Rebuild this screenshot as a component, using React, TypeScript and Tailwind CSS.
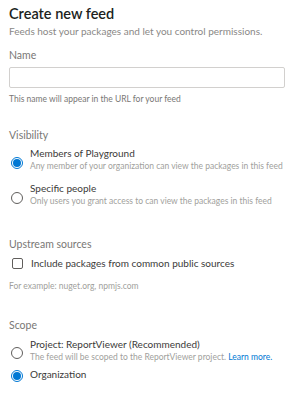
import React, { useState } from 'react';

const font = { fontFamily: 'Lato, "Open Sans", sans-serif' };

const Radio: React.FC<{ checked: boolean; className?: string }> = ({ checked, className = '' }) => (
  <span
    className={`w-[12px] h-[12px] rounded-full flex-shrink-0 flex items-center justify-center border ${
      checked ? 'border-[#0078d4]' : 'border-[#605e5c]'
    } ${className}`}
  >
    {checked && <span className="w-[8px] h-[8px] rounded-full bg-[#0078d4]" />}
  </span>
);

const App: React.FC = () => {
  const [visibility, setVisibility] = useState('members');
  const [scope, setScope] = useState('org');
  const [upstream, setUpstream] = useState(false);

  return (
    <div className="w-[297px] h-[400px] bg-white px-[9px] pt-[4px] text-[#323130] whitespace-nowrap" style={font}>
      {/* Header */}
      <h1 className="text-[14.5px] leading-[20px] font-semibold text-[#201f1e]">Create new feed</h1>
      <p className="text-[10px] leading-[14px] text-[#8a8886]">
        Feeds host your packages and let you control permissions.
      </p>

      {/* Name */}
      <div className="mt-[10px] text-[10.5px] leading-[14px] text-[#797775]">Name</div>
      <input
        type="text"
        className="mt-[5px] block w-[276px] h-[21px] border border-[#d2d0ce] rounded-[2px] outline-none px-2 text-[11px]"
      />
      <p className="mt-[5px] text-[8.5px] leading-[12px] text-[#797775]">
        This name will appear in the URL for your feed
      </p>

      {/* Visibility */}
      <div className="mt-[23px] text-[10.5px] leading-[14px] text-[#797775]">Visibility</div>
      <div className="mt-[5px] flex flex-col gap-[10px]">
        {[
          { id: 'members', title: 'Members of Playground', desc: 'Any member of your organization can view the packages in this feed' },
          { id: 'specific', title: 'Specific people', desc: 'Only users you grant access to can view the packages in this feed' },
        ].map((o) => (
          <button key={o.id} onClick={() => setVisibility(o.id)} className="flex items-start gap-[7px] pl-[2px] text-left">
            <Radio checked={visibility === o.id} className="mt-[10px]" />
            <span className="flex flex-col">
              <span className="text-[10px] leading-[13px] text-[#3b3a39]">{o.title}</span>
              <span className="text-[8.5px] leading-[12px] text-[#a19f9d]">{o.desc}</span>
            </span>
          </button>
        ))}
      </div>

      {/* Upstream */}
      <div className="mt-[30px] text-[10.5px] leading-[14px] text-[#797775]">Upstream sources</div>
      <button onClick={() => setUpstream(!upstream)} className="mt-[5px] flex items-center gap-[8px] pl-[3px]">
        <span className="w-[11px] h-[11px] rounded-[2px] border border-[#605e5c] bg-white" />
        <span className="text-[10px] leading-[14px] text-[#3b3a39]">Include packages from common public sources</span>
      </button>
      <p className="mt-[10px] text-[8.5px] leading-[12px] text-[#a19f9d]">For example: nuget.org, npmjs.com</p>

      {/* Scope */}
      <div className="mt-[26px] text-[10.5px] leading-[14px] text-[#797775]">Scope</div>
      <div className="mt-[6px] flex flex-col gap-[5px]">
        <button onClick={() => setScope('project')} className="flex items-start gap-[7px] pl-[2px] text-left">
          <Radio checked={scope === 'project'} className="mt-[9px]" />
          <span className="flex flex-col">
            <span className="text-[10px] leading-[13px] text-[#3b3a39]">Project: ReportViewer (Recommended)</span>
            <span className="text-[8.5px] leading-[12px] text-[#a19f9d]">
              The feed will be scoped to the ReportViewer project. <span className="text-[#0078d4]">Learn more.</span>
            </span>
          </span>
        </button>
        <button onClick={() => setScope('org')} className="flex items-start gap-[7px] pl-[2px] text-left">
          <Radio checked={scope === 'org'} className="mt-[2px]" />
          <span className="text-[10px] leading-[13px] text-[#3b3a39]">Organization</span>
        </button>
      </div>
    </div>
  );
};

export default App;
